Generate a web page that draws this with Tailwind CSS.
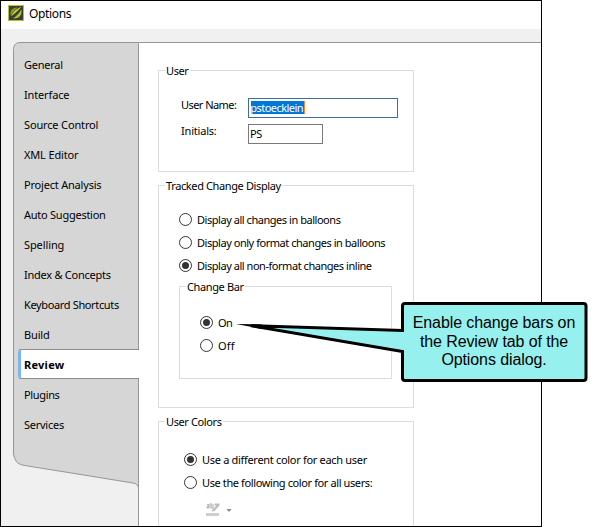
<!DOCTYPE html>
<html lang="en">
<head>
<meta charset="utf-8">
<title>Options</title>
<script src="https://cdn.jsdelivr.net/npm/@tailwindcss/browser@4"></script>
</head>
<body class="bg-white w-[596px] h-[527px] overflow-hidden relative font-['Noto_Sans',sans-serif] text-[11px] leading-4 text-black whitespace-nowrap">
<main class="w-[542px] h-[527px] border border-black bg-[#f0f0f0] flex flex-col overflow-hidden">
  <header class="h-7 shrink-0 bg-white flex pl-[7px] pt-1 text-[12px]">
    <svg class="w-4 h-4 shrink-0" viewBox="0 0 16 16"><rect x=".5" y=".5" width="15" height="15" fill="#3c3d3a" stroke="#b4c41c"/><path d="M2.800 10.500C1.500 6 4.500 2.300 9.500 2.500L4.500 7.500Z" fill="#8c9920"/><path d="M13.500 2C9 3.500 5 6 3 11.500Q8 8 13.500 2Z" fill="#c3d62f"/><path d="M13.300 4.500C14.500 10 11 14 5 13.300Q10.500 10 13.300 4.500Z" fill="#b4c62b"/><path d="M2.500 13.500Q8.500 9.500 13.300 3" fill="none" stroke="#3c3d3a" stroke-width="1.200"/></svg>
    <h1 class="ml-[5px] mt-px tracking-[-0.35px]">Options</h1>
  </header>
  <div class="flex flex-1 pt-[13px] pl-3 min-h-0">
    <nav class="relative w-[125px] shrink-0 flex flex-col">
      <svg class="absolute left-0 top-0 w-[126px] h-[484px]" viewBox="0 0 126 484" fill="none"><path d="M.5 411V6.500Q1 1.500 6 .5H125.500V446Q125 442 120 441L12 423.500Q5 422.500 3 419Q.5 415 .5 411Z" fill="#d6d6d6"/><path d="M125.500 307V.5H6Q1 1.500 .5 6.500V411Q.5 415 3 419Q5 422.500 12 423.500L120 441Q125 442 125.500 446M125.500 336V484" stroke="#969696"/></svg>
      <ul class="relative flex flex-col gap-[14px] pt-[15px] pl-[11px] tracking-[-0.25px]">
        <li>General</li>
        <li class="tracking-[-0.15px]">Interface</li>
        <li class="tracking-[-0.15px]">Source Control</li>
        <li class="tracking-[-0.15px]">XML Editor</li>
        <li class="tracking-[-0.2px]">Project Analysis</li>
        <li>Auto Suggestion</li>
        <li class="tracking-[-0.1px]">Spelling</li>
        <li>Index &amp; Concepts</li>
        <li class="tracking-[-0.36px]">Keyboard Shortcuts</li>
        <li class="tracking-[-0.15px]">Build</li>
        <li class="-ml-[6px] -mr-px -mt-[8px] -mb-[6px] h-[30px] border-y border-[#8c8c8c] bg-white rounded-l-[3px] flex font-bold tracking-[0.25px]"><i class="w-[3px] bg-[#7ab8eb] rounded-l-[2px]"></i><span class="ml-[3px] mt-[7px]">Review</span></li>
        <li class="tracking-[-0.35px]">Plugins</li>
        <li>Services</li>
      </ul>
    </nav>
    <section class="flex-1 min-w-0 bg-white border-t border-[#969696] ml-px pl-[19px] pt-[27px] tracking-[-0.38px]">
      <div class="w-[256px] h-[102px] border border-[#dcdcdc] pl-[6px]">
        <h2 class="-mt-2 w-fit bg-white px-px">User</h2>
        <div class="grid grid-cols-[67px_150px] pl-4 mt-[19px] gap-y-[6px]">
          <label class="-mt-px tracking-[-0.55px]">User Name:</label>
          <div class="h-5 border border-[#3a6e9e] pl-[2px] pt-[2px] flex"><span class="bg-[#0078d7] text-white leading-[14px] h-[13px] w-[54px] overflow-hidden border-r border-[#ff8728] indent-[-0.7px] tracking-[-0.55px]">pstoecklein</span></div>
          <label class="-mt-px tracking-[-0.2px]">Initials:</label>
          <div class="h-5 w-[75px] border border-[#7a7a7a] pl-px pt-px">PS</div>
        </div>
      </div>
      <div class="mt-[13px] w-[256px] h-[223px] border border-[#dcdcdc] pl-[6px]">
        <h2 class="-mt-2 w-fit bg-white px-px">Tracked Change Display</h2>
        <div class="pl-[14px] mt-[18px] flex flex-col gap-[7px] tracking-[-0.46px]">
          <label class="flex items-start gap-[5px]"><svg class="mt-px w-[13px] h-[13px]" viewBox="0 0 13 13"><circle cx="6.500" cy="6.500" r="6" fill="#fff" stroke="#333"/></svg>Display all changes in balloons</label>
          <label class="flex items-start gap-[5px]"><svg class="mt-px w-[13px] h-[13px]" viewBox="0 0 13 13"><circle cx="6.500" cy="6.500" r="6" fill="#fff" stroke="#333"/></svg>Display only format changes in balloons</label>
          <label class="flex items-start gap-[5px]"><svg class="mt-px w-[13px] h-[13px]" viewBox="0 0 13 13"><circle cx="6.500" cy="6.500" r="6" fill="#fff" stroke="#333"/><circle cx="6.500" cy="6.500" r="3.500" fill="#333"/></svg>Display all non-format changes inline</label>
        </div>
        <div class="ml-[14px] mt-[12px] w-[213px] h-[93px] border border-[#dcdcdc] pl-[6px]">
          <h3 class="-mt-2 w-fit bg-white px-px">Change Bar</h3>
          <div class="pl-[14px] mt-[20px] flex flex-col gap-[7px] tracking-normal">
            <label class="flex items-start gap-[5px]"><svg class="mt-px w-[13px] h-[13px]" viewBox="0 0 13 13"><circle cx="6.500" cy="6.500" r="6" fill="#fff" stroke="#333"/><circle cx="6.500" cy="6.500" r="3.500" fill="#333"/></svg><span class="tracking-[-0.5px]">On</span></label>
            <label class="flex items-start gap-[5px]"><svg class="mt-px w-[13px] h-[13px]" viewBox="0 0 13 13"><circle cx="6.500" cy="6.500" r="6" fill="#fff" stroke="#333"/></svg><span class="tracking-[0.2px]">Off</span></label>
          </div>
        </div>
      </div>
      <div class="mt-[13px] w-[256px] h-[140px] border border-[#dcdcdc] pl-[6px]">
        <h2 class="-mt-2 w-fit bg-white px-px">User Colors</h2>
        <div class="pl-[19px] mt-[22px] flex flex-col gap-[7px] tracking-[-0.31px]">
          <label class="flex items-start gap-[5px]"><svg class="mt-px w-[13px] h-[13px]" viewBox="0 0 13 13"><circle cx="6.500" cy="6.500" r="6" fill="#fff" stroke="#333"/><circle cx="6.500" cy="6.500" r="3.500" fill="#333"/></svg>Use a different color for each user</label>
          <label class="flex items-start gap-[5px]"><svg class="mt-px w-[13px] h-[13px]" viewBox="0 0 13 13"><circle cx="6.500" cy="6.500" r="6" fill="#fff" stroke="#333"/></svg><span class="tracking-[-0.39px]">Use the following color for all users:</span></label>
        </div>
        <svg class="ml-[41px] mt-[11px] w-[28px] h-[15px]" viewBox="0 0 28 15"><rect x="0" y="11" width="13" height="3" fill="#cfcfcf"/><path d="M1 2.500h2V6H1.300V4.300H3M5 1v5h2V3H5.500" fill="none" stroke="#b4b4b4" stroke-width="1.200"/><path d="M8.500 1.500H13.500V3.500L8.500 9L5.500 9.500L6.500 7.500L10.500 3.500H8.500Z" fill="#bdbdbd"/><path d="M20.500 7h5l-2.500 3z" fill="#8a8a8a"/></svg>
      </div>
    </section>
  </div>
</main>
<aside class="absolute left-[230px] top-[296px] w-[366px] h-[92px]">
  <svg class="absolute inset-0 w-full h-full" viewBox="230 296 366 92"><path d="M405 303.500H583.500Q586 303.500 586 306V378Q586 380.500 583.500 380.500H405Q402.500 380.500 402.500 378V351.500L251 325.700L402.500 330.500V306Q402.500 303.500 405 303.500Z" fill="#96f0ee" stroke="#000" stroke-width="3"/><path d="M236 324L262 324.400L262 329Z"/></svg>
  <p class="relative ml-[171px] mt-[18px] w-[186px] text-center font-['Liberation_Sans',sans-serif] text-[16px] leading-[18.500px] tracking-[-0.1px]">Enable change bars on<br>the Review tab of the<br>Options dialog.</p>
</aside>
</body>
</html>
